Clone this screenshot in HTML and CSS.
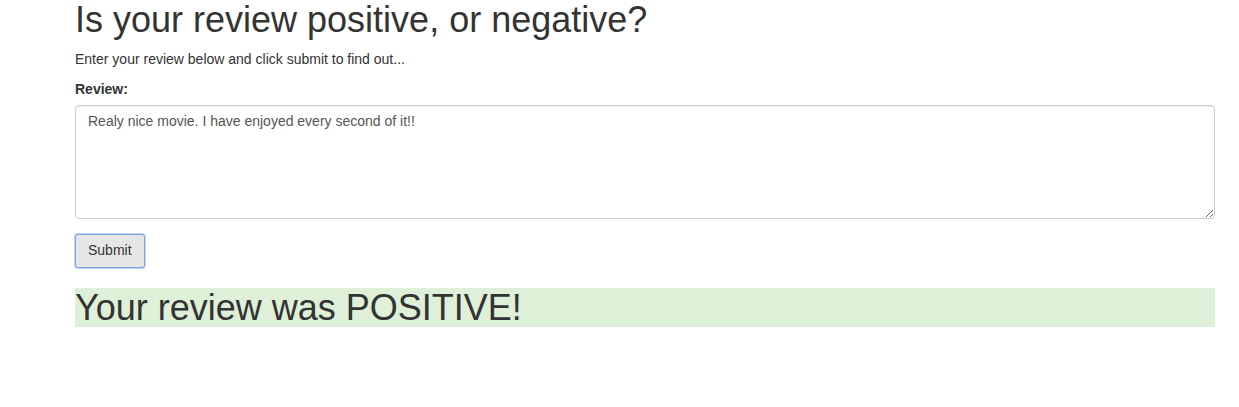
FILE: index.html
```html
<!DOCTYPE html>
<html lang="en">
<head>
<meta charset="utf-8">
<title>Review sentiment</title>
<link rel="stylesheet" href="styles.css">
</head>
<body>
<div class="container">
  <h1 class="title">Is your review positive, or negative?</h1>
  <p class="lead-text">Enter your review below and click submit to find out...</p>
  <form class="review-form">
    <div class="form-group">
      <label class="form-label" for="review">Review:</label>
      <textarea id="review" class="form-control" rows="5">Realy nice movie. I have enjoyed every second of it!!</textarea>
    </div>
    <button type="button" class="btn">Submit</button>
  </form>
  <h1 class="result">Your review was POSITIVE!</h1>
</div>
</body>
</html>
```

FILE: styles.css
```css
* { box-sizing: border-box; }
html, body { margin: 0; padding: 0; background: #fff; }
body {
  font-family: "Liberation Sans", Arial, Helvetica, sans-serif;
  font-size: 14px;
  line-height: 1.42857;
  color: #333;
}
.container {
  width: 1140px;
  margin-left: 75px;
}
.title {
  font-size: 36px;
  font-weight: 500;
  line-height: 1.1;
  margin: 0 0 10px;
}
.lead-text { margin: 0 0 10px; }
.form-group { margin-bottom: 15px; }
.form-label {
  display: inline-block;
  font-weight: 700;
  margin-bottom: 5px;
}
.form-control {
  display: block;
  width: 100%;
  height: 114px;
  padding: 6px 12px;
  font-family: inherit;
  font-size: 14px;
  line-height: 1.42857;
  color: #555;
  background: #fff;
  border: 1px solid #ccc;
  border-radius: 4px;
  box-shadow: inset 0 1px 1px rgba(0,0,0,.075);
  resize: vertical;
  margin: 0;
}
.btn {
  display: inline-block;
  padding: 6px 12px;
  font-family: inherit;
  font-size: 14px;
  line-height: 1.42857;
  color: #333;
  background: #e6e6e6;
  border: 1px solid #7da2e6;
  border-radius: 3px;
  box-shadow: 0 0 0 1px #c2d4f3;
  cursor: pointer;
}
.result {
  font-size: 36px;
  font-weight: 500;
  line-height: 1.1;
  margin: 20px 0 10px;
  background: #dff0d8;
}
```
